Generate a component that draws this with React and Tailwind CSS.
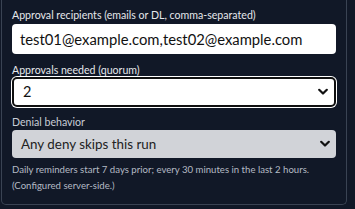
import React from "react";

function Chevron() {
  return (
    <svg className="pointer-events-none absolute right-[6px] top-1/2 -translate-y-1/2" width="10" height="7" viewBox="0 0 10 7">
      <path d="M1.2 1.2 L5 5 L8.8 1.2" fill="none" stroke="#111" strokeWidth="2.2" strokeLinecap="round" strokeLinejoin="round" />
    </svg>
  );
}

export default function App() {
  return (
    <div className="w-[355px] h-[209px] overflow-hidden bg-[#111827] font-['Lato',sans-serif]">
      <div className="ml-px w-[346px] border border-t-0 border-[#3a4353] rounded-b-[5px] px-[10px] pt-[8px] pb-[10px]">
        <label className="block text-[10.6px] leading-[14px] text-[#e5e7eb]">
          Approval recipients (emails or DL, comma-separated)
        </label>
        <div className="mt-[2px] h-[30px] rounded-[4px] bg-white pl-[8px] flex items-center text-[14.8px] text-[#111]">
          test01@example.com,test02@example.com
        </div>
        <label className="mt-[9px] block text-[10.6px] leading-[14px] text-[#e5e7eb]">
          Approvals needed (quorum)
        </label>
        <div className="relative mt-0 h-[30px] rounded-[5px] bg-white border-2 border-[#101010] shadow-[0_0_0_1px_#ffffff] flex items-center pl-[9px] text-[14.5px] text-[#111]">
          2
          <Chevron />
        </div>
        <label className="mt-[8px] block text-[10.6px] leading-[14px] text-[#c9ced6]">
          Denial behavior
        </label>
        <div className="relative mt-[1px] h-[28px] rounded-[4px] bg-[#d1d3d8] flex items-center pl-[9px] text-[13.4px] text-[#222]">
          Any deny skips this run
          <Chevron />
        </div>
        <p className="mt-[4px] text-[9.6px] leading-[16px] text-[#b4bac4] whitespace-nowrap">
          Daily reminders start 7 days prior; every 30 minutes in the last 2 hours.
          <br />
          (Configured server-side.)
        </p>
      </div>
    </div>
  );
}
